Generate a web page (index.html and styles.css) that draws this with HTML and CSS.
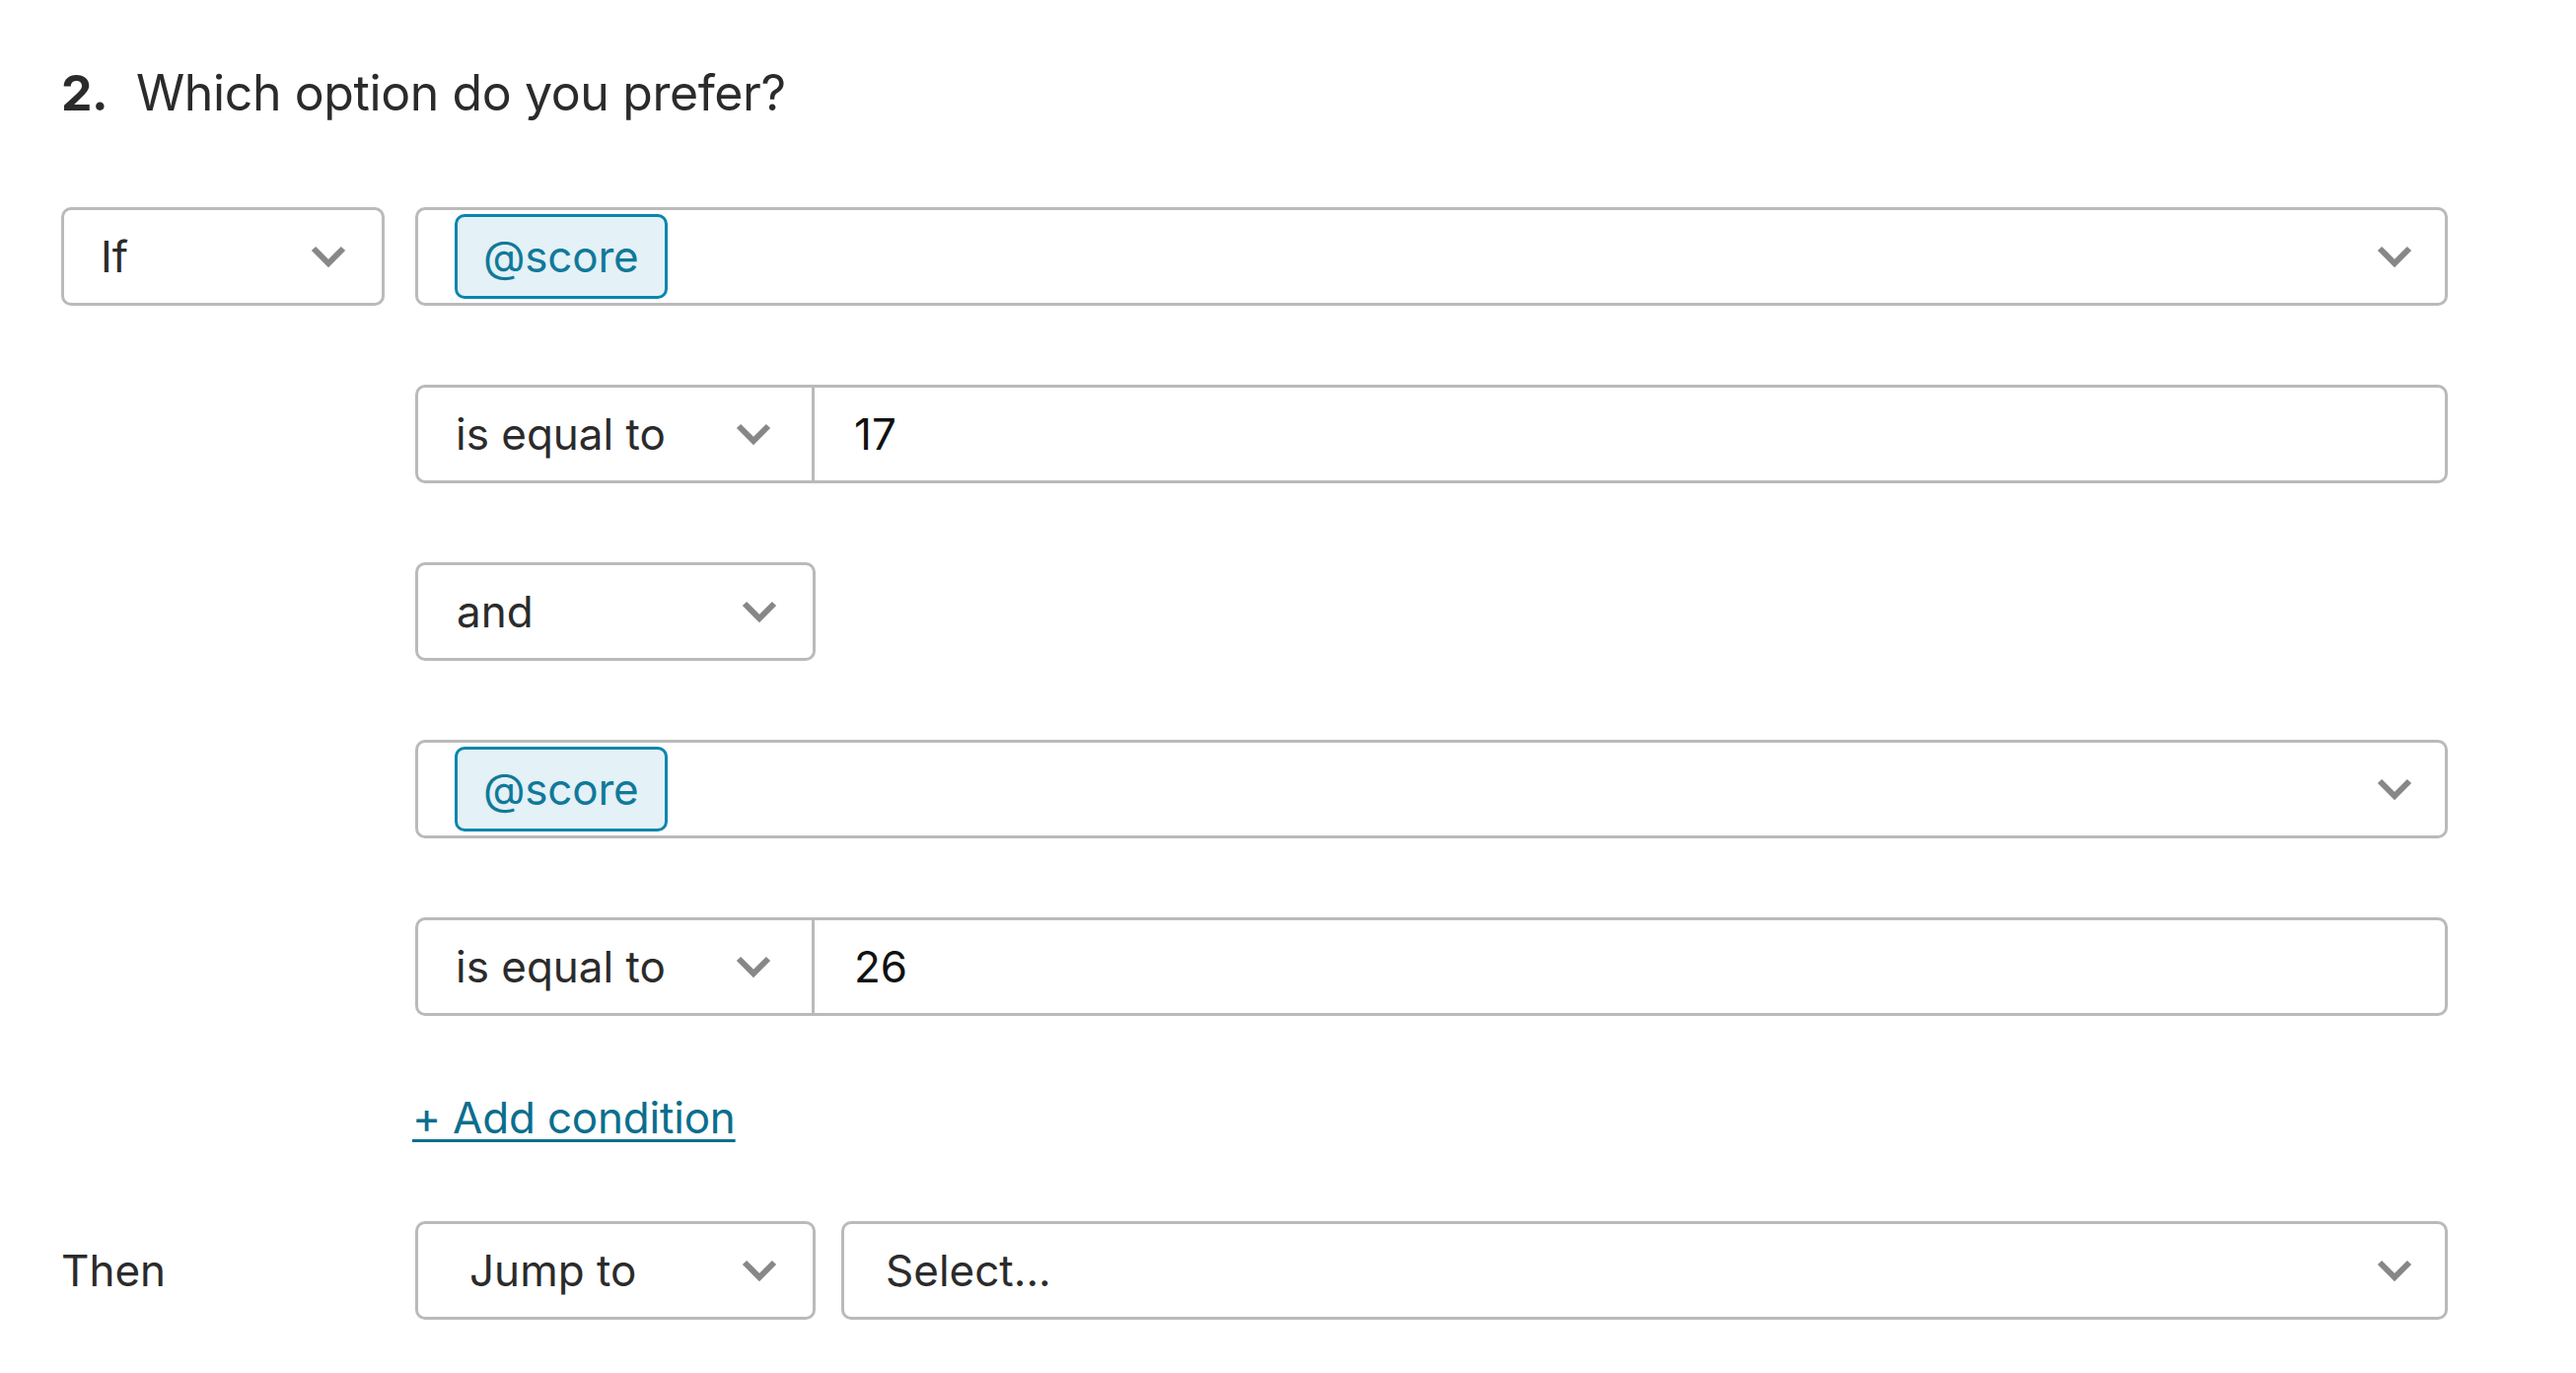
FILE: index.html
```html
<!DOCTYPE html>
<html lang="en">
<head>
  <meta charset="UTF-8">
  <meta name="viewport" content="width=device-width, initial-scale=1.0">
  <title>Logic jump</title>
  <link rel="stylesheet" href="styles.css">
</head>
<body>
  <div class="logic-block">
    <h2 class="question"><span class="q-num">2.</span>Which option do you prefer?</h2>

    <div class="rules">
      <!-- If ... -->
      <div class="rule-row">
        <div class="lead">
          <div class="field field-if">
            <span class="value">If</span>
            <svg class="chev" viewBox="0 0 36 22"><polyline points="3,3 18,18 33,3"/></svg>
          </div>
        </div>
        <div class="field field-wide">
          <span class="value"><span class="chip">@score</span></span>
          <svg class="chev" viewBox="0 0 36 22"><polyline points="3,3 18,18 33,3"/></svg>
        </div>
      </div>

      <div class="rule-row">
        <div class="lead"></div>
        <div class="compound">
          <div class="compound-op">
            <span class="value">is equal to</span>
            <svg class="chev" viewBox="0 0 36 22"><polyline points="3,3 18,18 33,3"/></svg>
          </div>
          <div class="compound-input">17</div>
        </div>
      </div>

      <div class="rule-row">
        <div class="lead"></div>
        <div class="field field-join">
          <span class="value">and</span>
          <svg class="chev" viewBox="0 0 36 22"><polyline points="3,3 18,18 33,3"/></svg>
        </div>
      </div>

      <div class="rule-row">
        <div class="lead"></div>
        <div class="field field-wide">
          <span class="value"><span class="chip">@score</span></span>
          <svg class="chev" viewBox="0 0 36 22"><polyline points="3,3 18,18 33,3"/></svg>
        </div>
      </div>

      <div class="rule-row">
        <div class="lead"></div>
        <div class="compound">
          <div class="compound-op">
            <span class="value">is equal to</span>
            <svg class="chev" viewBox="0 0 36 22"><polyline points="3,3 18,18 33,3"/></svg>
          </div>
          <div class="compound-input">26</div>
        </div>
      </div>

      <div class="add-row">
        <a href="#" class="add-link">+ Add condition</a>
      </div>

      <!-- Then ... -->
      <div class="rule-row">
        <div class="lead lead-label">Then</div>
        <div class="then-fields">
          <div class="field field-jump">
            <span class="value">Jump to</span>
            <svg class="chev" viewBox="0 0 36 22"><polyline points="3,3 18,18 33,3"/></svg>
          </div>
          <div class="field field-target">
            <span class="value">Select...</span>
            <svg class="chev" viewBox="0 0 36 22"><polyline points="3,3 18,18 33,3"/></svg>
          </div>
        </div>
      </div>
    </div>
  </div>
</body>
</html>
```

FILE: styles.css
```css
body {
  margin: 0;
  padding: 0;
  font-family: Inter, "Liberation Sans", sans-serif;
  color: #2b2b2b;
  background-color: #fff;
}

.logic-block {
  padding: 68px 0 0 62px;
}

.question {
  margin: 0 0 90px;
  font-size: 50px;
  line-height: 52px;
  font-weight: 400;
  letter-spacing: -0.4px;
}

.q-num {
  display: inline-block;
  width: 76px;
  font-weight: 700;
}

.rules {
  display: flex;
  flex-direction: column;
  gap: 80px;
}

.rule-row {
  display: flex;
  align-items: center;
  height: 100px;
}

.lead {
  width: 359px;
  flex: none;
}

.lead-label {
  font-size: 44px;
}

/* select-like boxes */
.field {
  box-sizing: border-box;
  height: 100px;
  display: flex;
  align-items: center;
  padding: 0 33px 0 37px;
  border: 3px solid #bababa;
  border-radius: 10px;
  font-size: 44px;
  background-color: #fff;
}

.field .value {
  flex: 1;
  display: flex;
  align-items: center;
}

.chev {
  width: 36px;
  height: 22px;
  flex: none;
}

.chev polyline {
  fill: none;
  stroke: #878787;
  stroke-width: 6;
}

.field-if {
  width: 328px;
  padding-right: 36px;
}

.field-wide {
  width: 2061px;
}

.field-join {
  width: 406px;
  padding-left: 39px;
  padding-right: 36px;
}

.chip {
  box-sizing: border-box;
  height: 86px;
  display: inline-flex;
  align-items: center;
  padding: 0 26px;
  border: 3px solid #0a86ad;
  border-radius: 10px;
  background-color: #e4f1f6;
  color: #10799a;
  letter-spacing: -0.2px;
}

/* operator + value */
.compound {
  box-sizing: border-box;
  width: 2061px;
  height: 100px;
  display: flex;
  border: 3px solid #bababa;
  border-radius: 10px;
  font-size: 44px;
}

.compound-op {
  width: 402px;
  display: flex;
  align-items: center;
  padding: 0 41px 0 38px;
  box-sizing: border-box;
  border-right: 3px solid #bababa;
  flex: none;
}

.compound-op .value {
  flex: 1;
}

.compound-input {
  flex: 1;
  display: flex;
  align-items: center;
  padding-left: 40px;
  color: #111;
}

.add-row {
  height: 48px;
  padding-left: 356px;
}

.add-link {
  font-size: 44px;
  line-height: 46px;
  color: #0b6e8e;
  letter-spacing: -0.2px;
  text-decoration: underline;
  text-decoration-thickness: 3px;
  text-underline-offset: 6px;
}

.then-fields {
  display: flex;
  gap: 26px;
}

.field-jump {
  width: 406px;
  padding-left: 52px;
  padding-right: 36px;
}

.field-target {
  width: 1629px;
  padding-left: 42px;
}
```
